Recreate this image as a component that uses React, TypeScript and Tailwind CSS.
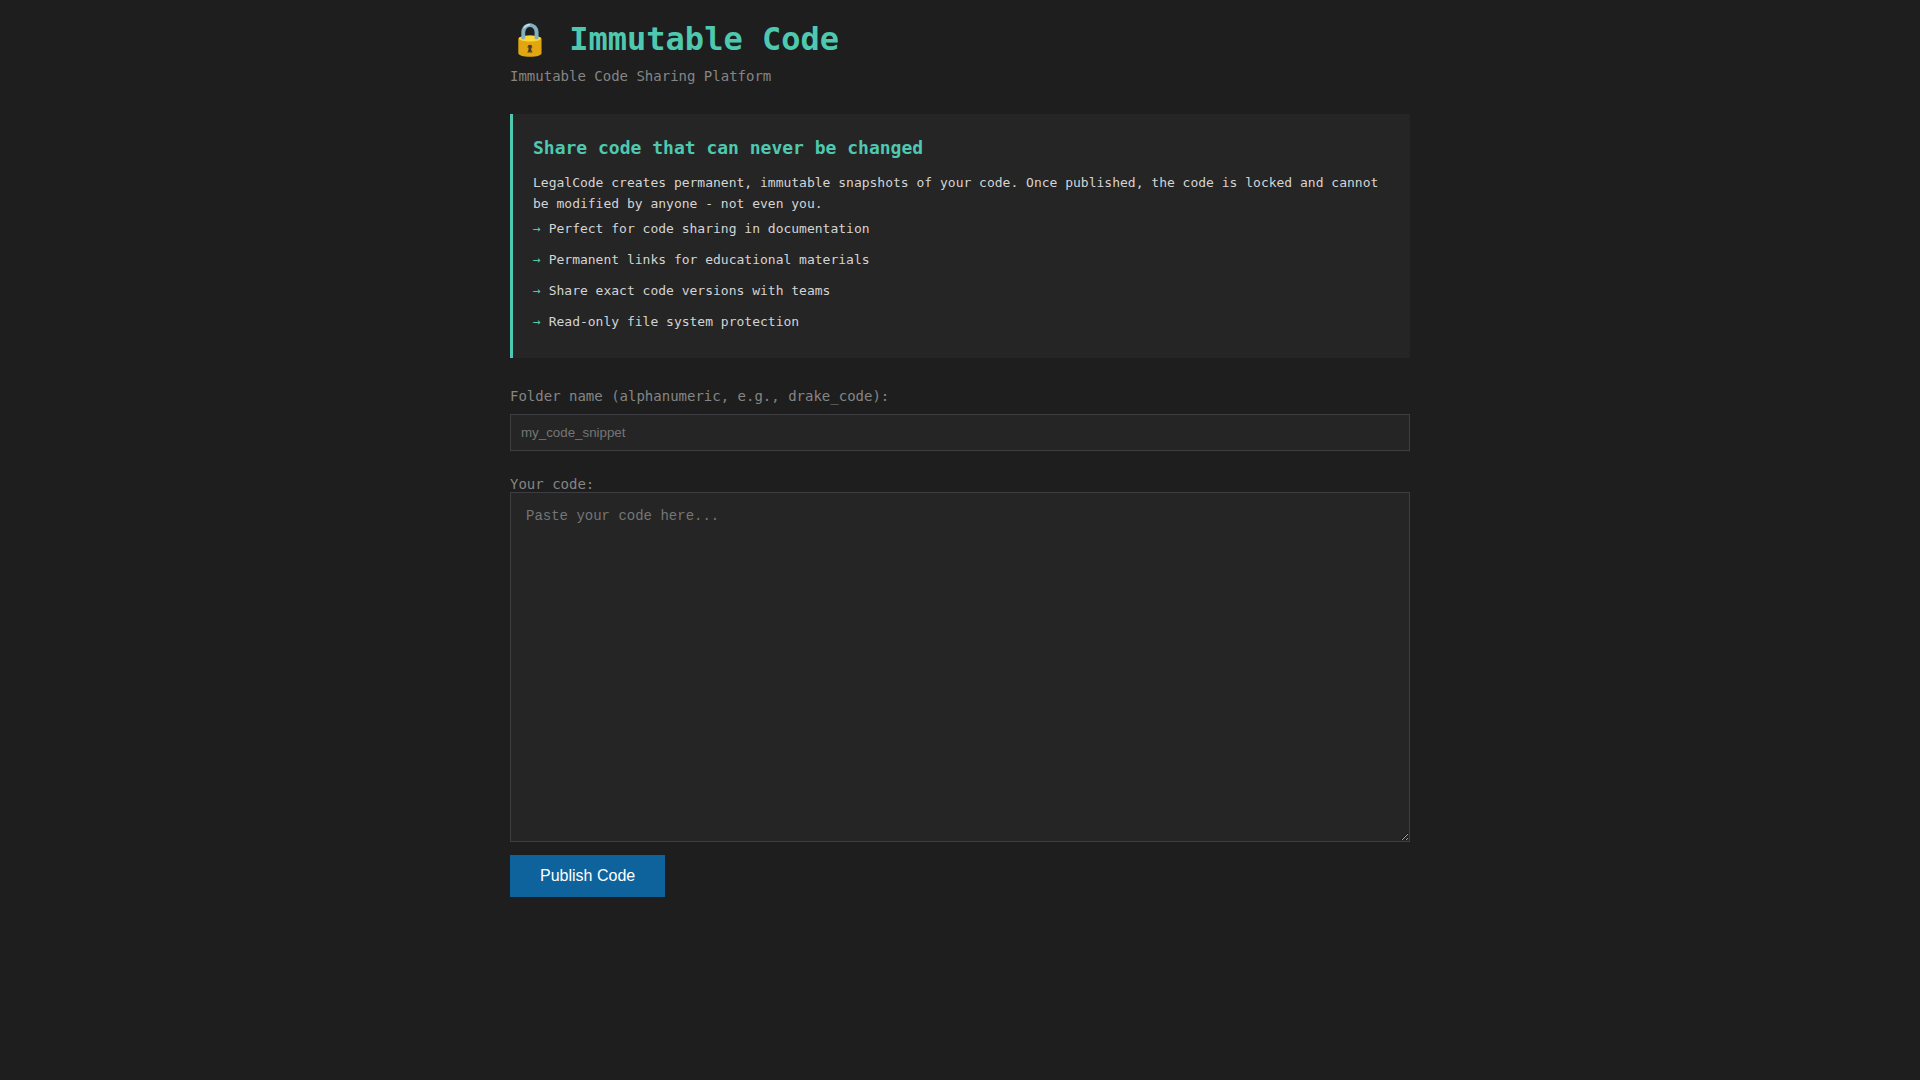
import { useState } from "react";

const features = [
  "Perfect for code sharing in documentation",
  "Permanent links for educational materials",
  "Share exact code versions with teams",
  "Read-only file system protection",
];

const App = () => {
  const [folder, setFolder] = useState("");
  const [code, setCode] = useState("");

  return (
    <div className="min-h-screen bg-[#1e1e1e] p-5 font-['DejaVu_Sans_Mono',monospace] text-[#d4d4d4]">
      <div className="mx-auto w-[900px]">
        <header className="mb-[30px]">
          <h1 className="mb-2.5 text-[32px] leading-[38px] font-bold text-[#4ec9b0]">🔒 Immutable Code</h1>
          <p className="text-sm leading-4 text-[#858585]">Immutable Code Sharing Platform</p>
        </header>

        <section className="mb-[30px] border-l-[3px] border-[#4ec9b0] bg-[#252526] p-5">
          <h2 className="mb-2.5 text-lg leading-[1.6] font-bold text-[#4ec9b0]">Share code that can never be changed</h2>
          <p className="text-[13px] leading-[1.6]">
            LegalCode creates permanent, immutable snapshots of your code. Once published, the code is locked and cannot be modified by anyone - not even you.
          </p>
          <ul className="text-[13px] leading-[1.6]">
            {features.map((feature) => (
              <li key={feature} className="py-[5px]">
                <span className="text-[#4ec9b0]">→ </span>
                {feature}
              </li>
            ))}
          </ul>
        </section>

        <form onSubmit={(e) => e.preventDefault()}>
          <label htmlFor="folder" className="mb-2.5 block text-sm leading-4 text-[#858585]">
            Folder name (alphanumeric, e.g., drake_code):
          </label>
          <input
            id="folder"
            value={folder}
            onChange={(e) => setFolder(e.target.value)}
            placeholder="my_code_snippet"
            className="mb-[25px] block h-[37px] w-full border border-[#3e3e42] bg-[#252526] px-2.5 font-['Liberation_Sans',sans-serif] text-[13.333px] placeholder:text-[#757575] focus:outline-none"
          />
          <label htmlFor="code" className="block text-sm leading-4 text-[#858585]">
            Your code:
          </label>
          <textarea
            id="code"
            value={code}
            onChange={(e) => setCode(e.target.value)}
            placeholder="Paste your code here..."
            className="block h-[350px] w-full resize-y border border-[#3e3e42] bg-[#252526] p-[15px] font-['Liberation_Mono',monospace] text-sm leading-4 placeholder:text-[#757575] focus:outline-none"
          />
          <button
            type="submit"
            className="mt-[13px] block bg-[#0e639c] px-[30px] py-3 font-['Liberation_Sans',sans-serif] text-base leading-[18px] text-white"
          >
            Publish Code
          </button>
        </form>
      </div>
    </div>
  );
};

export default App;
